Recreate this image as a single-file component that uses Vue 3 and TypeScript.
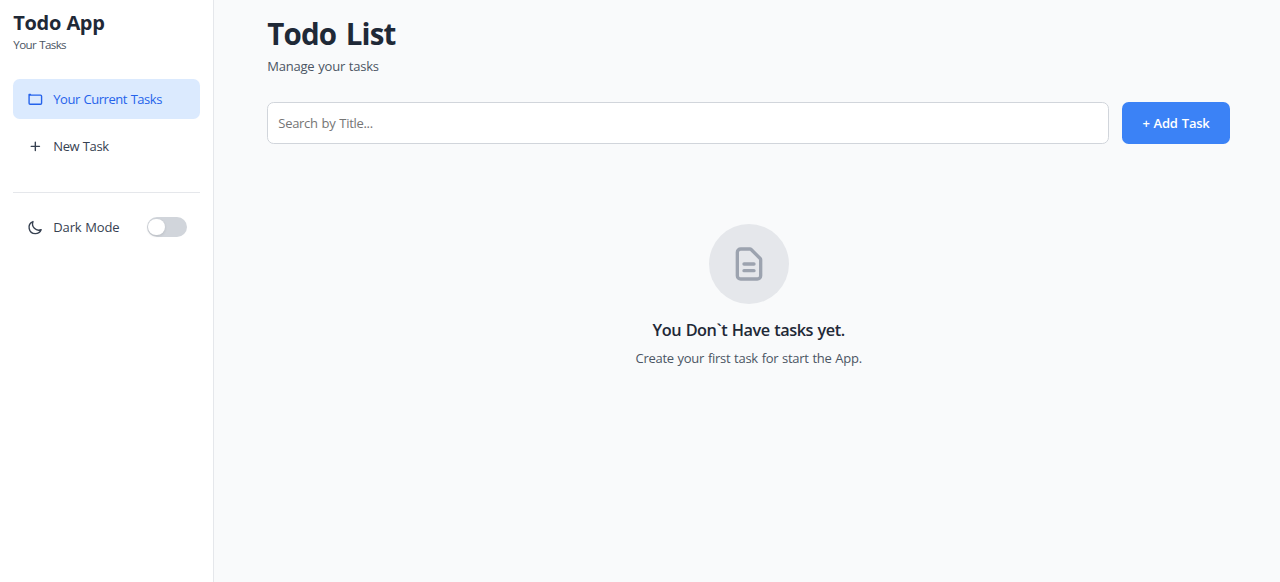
<script setup lang="ts">
import { ref } from 'vue'

const search = ref('')
const dark = ref(false)
</script>

<template>
  <div class="app">
    <aside class="sidebar">
      <h2 class="brand">Todo App</h2>
      <p class="brand-sub">Your Tasks</p>

      <nav class="nav">
        <a class="item active">
          <svg class="icon" viewBox="0 0 24 24">
            <path d="M3 5v12.5a1.5 1.5 0 001.5 1.5h15a1.5 1.5 0 001.5-1.5v-10a1.5 1.5 0 00-1.5-1.5H4.5a1.5 1.5 0 00-1.5 1M3 5h2" />
          </svg>
          <span class="current">Your Current Tasks</span>
        </a>
        <a class="item">
          <svg class="icon" viewBox="0 0 24 24">
            <path d="M12 6v12M6 12h12" />
          </svg>
          <span class="new">New Task</span>
        </a>
      </nav>

      <div class="mode">
        <svg class="icon" viewBox="0 0 24 24">
          <path d="M20.354 15.354A9 9 0 018.646 3.646 9.003 9.003 0 0012 21a9.003 9.003 0 008.354-5.646z" />
        </svg>
        <span class="mode-label">Dark Mode</span>
        <button class="toggle" role="switch" :aria-checked="dark" @click="dark = !dark">
          <span class="knob" :class="{ on: dark }"></span>
        </button>
      </div>
    </aside>

    <main class="main">
      <h1 class="title">Todo List</h1>
      <p class="subtitle">Manage your tasks</p>

      <div class="toolbar">
        <input v-model="search" class="search" type="text" placeholder="Search by Title..." />
        <button class="add">+ Add Task</button>
      </div>

      <section class="empty">
        <div class="circle">
          <svg class="doc" viewBox="0 0 24 24">
            <path d="M9 12h6m-6 4h6m2 5H7a2 2 0 01-2-2V5a2 2 0 012-2h5.586a1 1 0 01.707.293l5.414 5.414a1 1 0 01.293.707V19a2 2 0 01-2 2z" />
          </svg>
        </div>
        <h3 class="empty-title">You Don`t Have tasks yet.</h3>
        <p class="empty-text">Create your first task for start the App.</p>
      </section>
    </main>
  </div>
</template>

<style>
body {
  margin: 0;
}
</style>

<style scoped>
.app,
.app * {
  box-sizing: border-box;
}
.app {
  display: flex;
  height: 582px;
  overflow: hidden;
  background: #f9fafb;
  color: #374151;
  font-family: "Open Sans", "Noto Sans", sans-serif;
  font-size: 13px;
}
h1,
h2,
h3,
p {
  margin: 0;
}
svg {
  display: block;
  flex: none;
  fill: none;
  stroke: currentColor;
  stroke-width: 2;
  stroke-linecap: round;
  stroke-linejoin: round;
}
.sidebar {
  flex: none;
  width: 214px;
  padding: 10px 13.33px 0;
  background: #fff;
  border-right: 1px solid #e5e7eb;
}
.brand {
  font-size: 20px;
  line-height: 26px;
  font-weight: 700;
  letter-spacing: -0.35px;
  word-spacing: 0.6px;
  color: #1f2937;
}
.brand-sub {
  margin-top: 1px;
  font-size: 11.6px;
  line-height: 16px;
  letter-spacing: -0.62px;
  word-spacing: 0.6px;
  color: #4b5563;
}
.nav {
  display: flex;
  flex-direction: column;
  gap: 7px;
  margin-top: 26px;
  padding-bottom: 26px;
  border-bottom: 1px solid #e5e7eb;
}
.item {
  display: flex;
  align-items: center;
  gap: 10px;
  height: 40px;
  padding: 0 13.33px;
  border-radius: 6.67px;
}
.active {
  background: #dbeafe;
  color: #2563eb;
}
.icon {
  width: 16.67px;
  height: 16.67px;
}
.current {
  letter-spacing: -0.48px;
  word-spacing: 0.9px;
}
.new {
  letter-spacing: -0.4px;
  word-spacing: 0.6px;
}
.mode {
  display: flex;
  align-items: center;
  gap: 10px;
  height: 40px;
  margin-top: 14px;
  padding: 0 13px 0 13.33px;
}
.mode-label {
  letter-spacing: -0.15px;
  word-spacing: 0.5px;
}
.toggle {
  width: 40px;
  height: 20px;
  margin-left: auto;
  padding: 1.67px;
  border: 0;
  border-radius: 10px;
  background: #d1d5db;
}
.knob {
  display: block;
  width: 16.67px;
  height: 16.67px;
  border-radius: 50%;
  background: #fff;
  box-shadow: 0 1px 3px rgba(0, 0, 0, 0.12);
}
.knob.on {
  margin-left: auto;
}
.main {
  flex: 1;
  padding: 14px 50px 0 53.33px;
}
.title {
  font-size: 29.5px;
  line-height: 40px;
  font-weight: 700;
  letter-spacing: -0.9px;
  word-spacing: 3px;
  color: #1f2937;
}
.subtitle {
  margin-top: 2px;
  line-height: 20px;
  letter-spacing: -0.23px;
  word-spacing: 0.7px;
  color: #4b5563;
}
.toolbar {
  display: flex;
  gap: 13.33px;
  height: 42px;
  margin-top: 26px;
}
.search {
  flex: 1;
  min-width: 0;
  padding: 0 10px 1px;
  border: 1px solid #d1d5db;
  border-radius: 6.67px;
  outline: 0;
  background: #fff;
  font: inherit;
  letter-spacing: -0.3px;
  word-spacing: 0.8px;
}
.search::placeholder {
  color: #757575;
}
.add {
  width: 108px;
  padding: 0;
  border: 0;
  border-radius: 6.67px;
  background: #3b82f6;
  color: #fff;
  font: inherit;
  font-weight: 600;
  letter-spacing: -0.2px;
  word-spacing: 0.8px;
}
.empty {
  display: flex;
  flex-direction: column;
  align-items: center;
  margin-top: 80px;
}
.circle {
  display: flex;
  align-items: center;
  justify-content: center;
  width: 80px;
  height: 80px;
  border-radius: 50%;
  background: #e5e7eb;
  color: #9ca3af;
}
.doc {
  width: 40px;
  height: 40px;
}
.empty-title {
  margin-top: 14px;
  font-size: 16.3px;
  line-height: 24px;
  font-weight: 600;
  letter-spacing: -0.45px;
  word-spacing: 0.75px;
  color: #1f2937;
}
.empty-text {
  margin-top: 6px;
  line-height: 20px;
  letter-spacing: -0.28px;
  word-spacing: 0.7px;
  color: #4b5563;
}
</style>
